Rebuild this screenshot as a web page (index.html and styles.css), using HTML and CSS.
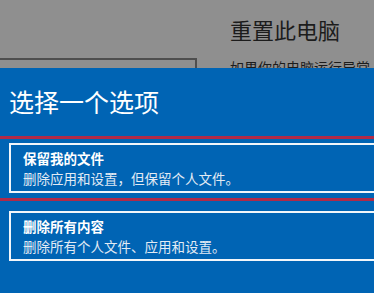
FILE: index.html
```html
<!DOCTYPE html>
<html lang="zh-CN">
<head>
    <meta charset="UTF-8">
    <meta name="viewport" content="width=device-width, initial-scale=1.0">
    <title>选择一个选项</title>
    <link rel="stylesheet" href="styles.css">
</head>
<body>
    <div class="settings">
        <div class="settings_side">
            <div class="side_box"></div>
        </div>
        <div class="settings_main">
            <h2>重置此电脑</h2>
            <p>如果你的电脑运行异常，重置电脑可能会解决问题。</p>
        </div>
    </div>
    <div class="dialog">
        <h1>选择一个选项</h1>
        <div class="option selected">
            <div class="option_box">
                <b>保留我的文件</b>
                <span>删除应用和设置，但保留个人文件。</span>
            </div>
        </div>
        <div class="option">
            <div class="option_box">
                <b>删除所有内容</b>
                <span>删除所有个人文件、应用和设置。</span>
            </div>
        </div>
    </div>
</body>
</html>
```

FILE: styles.css
```css
body, html, * {
    box-sizing: border-box;
    margin: 0;
    padding: 0;
}
body {
    font-family: "Noto Sans CJK SC", "Noto Sans", sans-serif;
    width: 374px;
    height: 293px;
    overflow: hidden;
}
.settings {
    display: flex;
    height: 68px;
    overflow: hidden;
    background-color: #8f8f8f;
}
.settings_side {
    width: 230px;
    flex-shrink: 0;
}
.side_box {
    margin: 58px 0 0 -10px;
    width: 207px;
    height: 40px;
    border: 2px solid #4e4e4e;
}
.settings_main {
    white-space: nowrap;
}
.settings_main h2 {
    font-size: 22px;
    font-weight: normal;
    line-height: 28px;
    margin-top: 15px;
    color: #1c1c1c;
}
.settings_main p {
    font-size: 14px;
    line-height: 20px;
    margin-top: 14px;
    color: #1c1c1c;
}
.dialog {
    height: 225px;
    overflow: hidden;
    background-color: #0064b4;
    color: #fff;
}
.dialog h1 {
    font-size: 25px;
    font-weight: normal;
    line-height: 36px;
    padding: 15px 0 0 9px;
    height: 68px;
}
.option {
    border-top: 3px solid transparent;
    border-bottom: 3px solid transparent;
    padding: 4px 0 5px;
    margin-bottom: 3px;
}
.option.selected {
    border-color: #b02a48;
}
.option_box {
    margin-left: 9px;
    width: 420px;
    border: 2px solid #f2f6fa;
    padding: 3px 12px 3px;
    display: flex;
    flex-direction: column;
}
.option_box b {
    font-size: 13.5px;
    line-height: 20px;
}
.option_box span {
    font-size: 13.5px;
    line-height: 20px;
    color: #e2ebf4;
}
```
